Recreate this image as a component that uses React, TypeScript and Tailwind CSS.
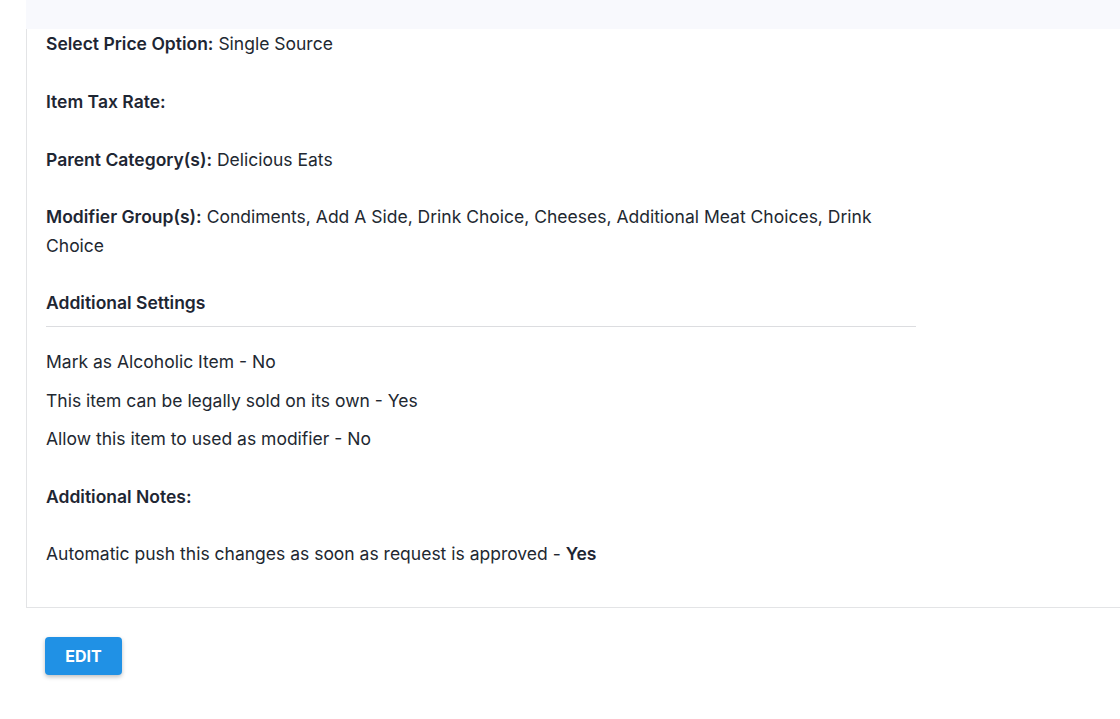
export default function App() {
  return (
    <div
      className="min-h-screen bg-white text-[17.5px] leading-[29px] text-[#222831]"
      style={{ fontFamily: 'Inter, "Noto Sans", sans-serif' }}
    >
      <div className="pl-[26px]">
        {/* top strip */}
        <div className="h-[29px] bg-[#f8f9fd]" />

        {/* details panel */}
        <div className="border-l border-b border-[#e3e4e6] pl-[19px] pb-[39px]">
          <div className="w-[862px]">
            <p>
              <span className="font-semibold text-[#1e2633]">Select Price Option:</span> Single Source
            </p>
            <p className="mt-[29px]">
              <span className="font-semibold text-[#1e2633]">Item Tax Rate:</span>
            </p>
            <p className="mt-[29px]">
              <span className="font-semibold text-[#1e2633]">Parent Category(s):</span> Delicious Eats
            </p>
            <p className="mt-[28px]">
              <span className="font-semibold text-[#1e2633]">Modifier Group(s):</span> Condiments, Add A Side,
              Drink Choice, Cheeses, Additional Meat Choices, Drink Choice
            </p>

            <h3 className="mt-[28px] w-[870px] pb-[9px] border-b border-[#dcdde0] font-semibold text-[#1e2633]">
              Additional Settings
            </h3>
            <ul className="mt-[20px] flex flex-col gap-[9.5px]">
              <li>Mark as Alcoholic Item - No</li>
              <li>This item can be legally sold on its own - Yes</li>
              <li>Allow this item to used as modifier - No</li>
            </ul>

            <h3 className="mt-[29px] font-semibold text-[#1e2633]">Additional Notes:</h3>
            <p className="mt-[28px]">
              Automatic push this changes as soon as request is approved -{' '}
              <span className="font-semibold text-[#1e2633]">Yes</span>
            </p>
          </div>
        </div>
      </div>

      <div className="pl-[45px] pt-[29px]">
        <button className="h-[38px] w-[77px] rounded-[4px] bg-[#2091e5] text-[16px] font-bold text-white shadow-[0_2px_4px_rgba(0,0,0,0.25)]">
          EDIT
        </button>
      </div>
    </div>
  );
}
